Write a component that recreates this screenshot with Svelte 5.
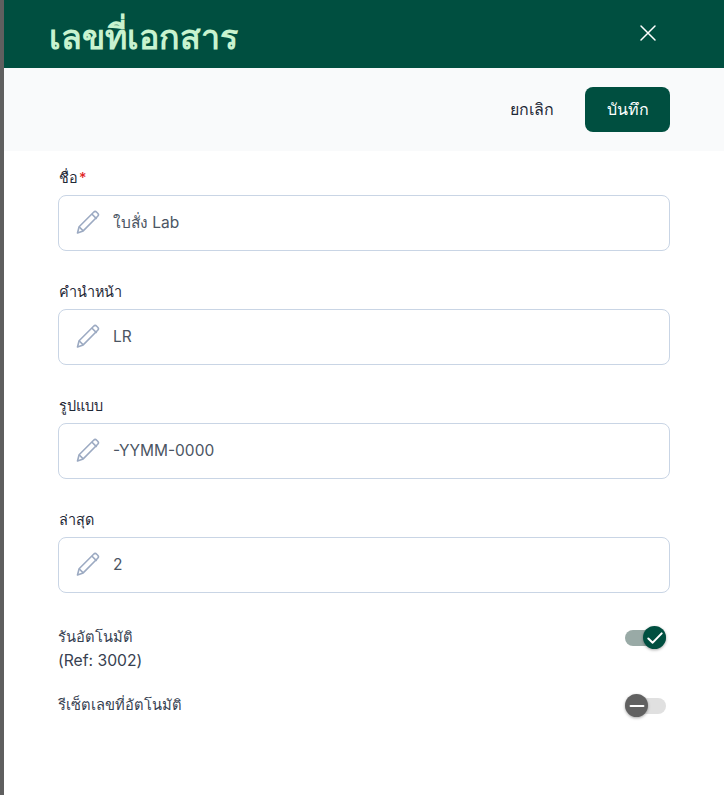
<script lang="ts">
	type Field = { label: string; value: string; required?: boolean };

	const fields: Field[] = [
		{ label: 'ชื่อ', value: 'ใบสั่ง Lab', required: true },
		{ label: 'คำนำหน้า', value: 'LR' },
		{ label: 'รูปแบบ', value: '-YYMM-0000' },
		{ label: 'ล่าสุด', value: '2' }
	];
</script>

<div class="page">
	<div class="drawer">
		<header class="head">
			<h1>เลขที่เอกสาร</h1>
			<button class="close" aria-label="close">
				<svg width="18" height="18" viewBox="0 0 18 18" fill="none" stroke="currentColor" stroke-width="1.5" stroke-linecap="round">
					<path d="M2 2l14 14M16 2L2 16" />
				</svg>
			</button>
		</header>

		<div class="actions">
			<button class="cancel">ยกเลิก</button>
			<button class="save">บันทึก</button>
		</div>

		<form class="form">
			{#each fields as field}
				<div class="field">
					<div class="label">{field.label}{#if field.required}<span class="req">*</span>{/if}</div>
					<div class="input">
						<svg class="pencil" width="24" height="24" viewBox="0 0 24 24" fill="none" stroke="currentColor" stroke-width="1.6" stroke-linejoin="round">
							<path d="M1.5 23l1.6-6.2L17.6 2.2a2.2 2.2 0 0 1 3.1 0l1 1a2.2 2.2 0 0 1 0 3.1L7.2 20.9z" />
							<path d="M15.8 4l4.9 4.9M3.1 16.8l4.1 4.1" />
						</svg>
						<span>{field.value}</span>
					</div>
				</div>
			{/each}

			<div class="switch-row first">
				<div class="switch-text">รันอัตโนมัติ<br /><span class="ref">(Ref: 3002)</span></div>
				<div class="toggle on">
					<span class="knob">
						<svg width="18" height="18" viewBox="0 0 14 14" fill="none" stroke="#fff" stroke-width="1.6" stroke-linecap="round" stroke-linejoin="round">
							<path d="M1.8 7.4l3.4 3.2 7-7.2" />
						</svg>
					</span>
				</div>
			</div>
			<div class="switch-row">
				<div class="switch-text">รีเซ็ตเลขที่อัตโนมัติ</div>
				<div class="toggle off">
					<span class="knob">
						<svg width="18" height="18" viewBox="0 0 14 14" fill="none" stroke="#fff" stroke-width="1.6" stroke-linecap="round">
							<path d="M2 7h10" />
						</svg>
					</span>
				</div>
			</div>
		</form>
	</div>
</div>

<style>
	:global(body) {
		margin: 0;
		background: #5f5f5f;
		font-family: Inter, 'Noto Sans', 'DejaVu Sans', sans-serif;
	}

	.page {
		height: 795px;
		padding-left: 4px;
		overflow: hidden;
	}

	.drawer {
		height: 100%;
		background: #fff;
	}

	.head {
		height: 68px;
		box-sizing: border-box;
		background: #004f40;
		display: flex;
		align-items: center;
		justify-content: space-between;
		padding: 0 67px 2px 45px;
	}

	h1 {
		margin: 8px 0 0;
		font-size: 34px;
		font-weight: 600;
		line-height: 48px;
		color: #c8f3cf;
	}

	.close {
		display: flex;
		padding: 0;
		border: 0;
		background: none;
		color: #fff;
	}

	.actions {
		height: 83px;
		box-sizing: border-box;
		background: #f9fafb;
		display: flex;
		align-items: center;
		justify-content: flex-end;
		gap: 10px;
		padding: 0 54px 0 0;
		margin-bottom: 10px;
	}

	button {
		font-family: inherit;
	}

	.cancel,
	.save {
		height: 45px;
		border: 0;
		border-radius: 8px;
		font-size: 16px;
		font-weight: 500;
	}

	.cancel {
		width: 86px;
		background: none;
		color: #1f2937;
	}

	.save {
		width: 85px;
		background: #004f40;
		color: #fff;
	}

	.form {
		padding: 0 54px;
	}

	.field {
		margin-bottom: 24px;
	}

	.label {
		height: 34px;
		padding-left: 1px;
		font-size: 14.4px;
		font-weight: 500;
		line-height: 34px;
		color: #1f2937;
	}

	.req {
		color: #e02424;
		margin-left: 1px;
	}

	.input {
		height: 56px;
		box-sizing: border-box;
		display: flex;
		align-items: center;
		gap: 13px;
		padding: 0 0 2px 17px;
		border: 1px solid #c9d5e5;
		border-radius: 8px;
		background: #fff;
		font-size: 15.5px;
		color: #4b5563;
	}

	.pencil {
		color: #9caac2;
		flex: none;
	}

	.switch-row {
		display: flex;
		justify-content: space-between;
		font-size: 14.7px;
		line-height: 24px;
		color: #374151;
		margin-bottom: 20px;
	}

	.switch-row.first {
		margin-top: 32px;
	}

	.ref {
		font-size: 15.7px;
	}

	.toggle {
		position: relative;
		width: 41px;
		height: 16px;
		border-radius: 8px;
		margin: 5px 4px 0 0;
	}

	.toggle.on {
		background: #99aaa6;
	}

	.toggle.off {
		background: #e0e0e0;
	}

	.knob {
		position: absolute;
		top: -4px;
		width: 23px;
		height: 23px;
		border-radius: 50%;
		display: flex;
		align-items: center;
		justify-content: center;
		box-shadow: 0 1px 3px rgba(0, 0, 0, 0.35);
	}

	.on .knob {
		right: 0;
		background: #004f40;
	}

	.off .knob {
		left: 0;
		background: #616161;
	}
</style>
